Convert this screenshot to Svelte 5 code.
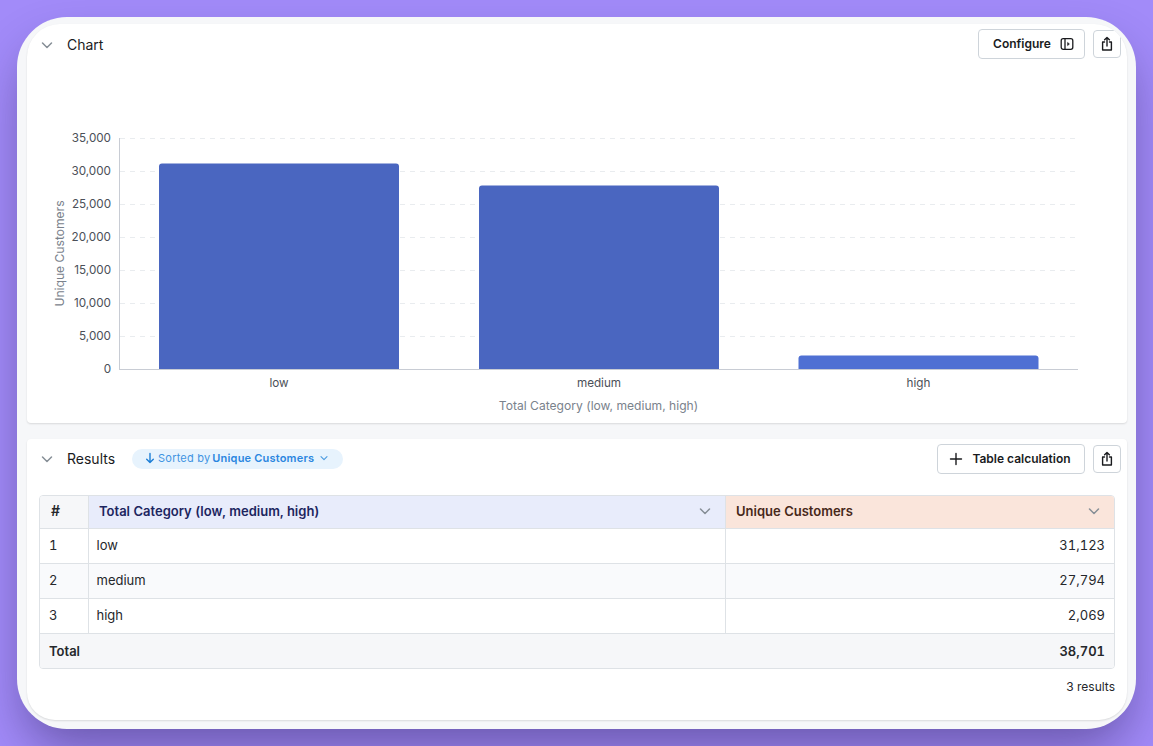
<script>
  const ticks = [
    { label: '35,000', y: 138.5 },
    { label: '30,000', y: 171.5 },
    { label: '25,000', y: 204.5 },
    { label: '20,000', y: 237.5 },
    { label: '15,000', y: 270.5 },
    { label: '10,000', y: 303.5 },
    { label: '5,000', y: 336.5 },
    { label: '0', y: 369.5 }
  ];

  const bars = [
    { label: 'low', x: 159, top: 163.5, fill: '#4a66c0' },
    { label: 'medium', x: 479, top: 185.5, fill: '#4a66c0' },
    { label: 'high', x: 798.5, top: 355.5, fill: '#4f70d3' }
  ];

  const rows = [
    { n: 1, cat: 'low', val: '31,123' },
    { n: 2, cat: 'medium', val: '27,794' },
    { n: 3, cat: 'high', val: '2,069' }
  ];

  // card-local coords: the svg starts at the card's top-left (27, 24)
  const barPath = (b) => {
    const l = b.x - 27;
    const t = b.top - 24;
    const r = l + 240;
    const base = 345;
    return `M${l} ${base}V${t + 3}Q${l} ${t} ${l + 3} ${t}H${r - 3}Q${r} ${t} ${r} ${t + 3}V${base}Z`;
  };
</script>

{#snippet chevron()}
  <svg class="chev" width="16" height="16" viewBox="0 0 16 16" fill="none">
    <path d="M3.5 6 8 10.5 12.5 6" stroke="#868e96" stroke-width="1.5" stroke-linecap="round" stroke-linejoin="round" />
  </svg>
{/snippet}

{#snippet share()}
  <button class="btn square">
    <svg width="14" height="16" viewBox="0 0 14 16" fill="none" stroke="#1a1b1e" stroke-width="1.4" stroke-linecap="round" stroke-linejoin="round">
      <path d="M4.5 6H2.6v8h8.8V6H9.5" />
      <path d="M7 10V1.5M4.6 3.7 7 1.4l2.4 2.3" />
    </svg>
  </button>
{/snippet}

<div class="window">
  <section class="card chart-card">
    <header class="bar">
      <div class="title">
        {@render chevron()}
        <span>Chart</span>
      </div>
      <div class="actions">
        <button class="btn configure">
          <span class="lbl">Configure</span>
          <svg width="14" height="14" viewBox="0 0 14 14" fill="none" stroke="#1a1b1e" stroke-width="1.3">
            <rect x="1.2" y="1.7" width="11.6" height="10.6" rx="2" />
            <path d="M5 1.7v10.6" />
            <path d="M7.6 5.4 9.4 7 7.6 8.6Z" fill="#1a1b1e" stroke-width="0.6" />
          </svg>
        </button>
        {@render share()}
      </div>
    </header>

    <svg class="plot" width="1100" height="399" viewBox="0 0 1100 399">
      {#each ticks as t, i}
        {#if i < ticks.length - 1}
          <line x1="93" x2="1051" y1={t.y - 24} y2={t.y - 24} class="grid" />
        {/if}
        <text x="84" y={t.y - 24 + 3.5} text-anchor="end" class="tick">{t.label}</text>
      {/each}
      {#each bars as b}
        <path d={barPath(b)} fill={b.fill} />
        <text x={b.x - 27 + 120} y="363" text-anchor="middle" class="cat">{b.label}</text>
      {/each}
      <line x1="92.5" x2="92.5" y1="114" y2="345.5" class="axis" />
      <line x1="92" x2="1051" y1="345.5" y2="345.5" class="axis" />
      <text x="571.5" y="386" text-anchor="middle" class="axis-label">Total Category (low, medium, high)</text>
      <text transform="translate(36.5 229.5) rotate(-90)" text-anchor="middle" class="axis-label">Unique Customers</text>
    </svg>
  </section>

  <section class="card results-card">
    <header class="bar">
      <div class="title">
        {@render chevron()}
        <span>Results</span>
        <span class="pill">
          <svg width="10" height="12" viewBox="0 0 10 12" fill="none" stroke="#1c7ed6" stroke-width="1.4" stroke-linecap="round" stroke-linejoin="round">
            <path d="M5 1.5v9M1.7 7.2 5 10.5l3.3-3.3" />
          </svg>
          <span class="sorted">Sorted by</span>
          <b>Unique Customers</b>
          <svg class="pill-chev" width="10" height="10" viewBox="0 0 10 10" fill="none">
            <path d="M2 3.7 5 6.7l3-3" stroke="#4a9be0" stroke-width="1.1" stroke-linecap="round" stroke-linejoin="round" />
          </svg>
        </span>
      </div>
      <div class="actions">
        <button class="btn calc">
          <svg width="14" height="14" viewBox="0 0 14 14" fill="none" stroke="#1a1b1e" stroke-width="1.4" stroke-linecap="round">
            <path d="M7 1.5v11M1.5 7h11" />
          </svg>
          <span class="lbl">Table calculation</span>
        </button>
        {@render share()}
      </div>
    </header>

    <div class="table-wrap">
      <table>
        <thead>
          <tr>
            <th class="idx">#</th>
            <th class="dim">
              <div class="th-in">Total Category (low, medium, high) {@render chevron()}</div>
            </th>
            <th class="metric">
              <div class="th-in">Unique Customers {@render chevron()}</div>
            </th>
          </tr>
        </thead>
        <tbody>
          {#each rows as r, i}
            <tr class:odd={i % 2 === 1}>
              <td class="idx-cell">{r.n}</td>
              <td>{r.cat}</td>
              <td class="num">{r.val}</td>
            </tr>
          {/each}
        </tbody>
        <tfoot>
          <tr>
            <td colspan="2">Total</td>
            <td class="num">38,701</td>
          </tr>
        </tfoot>
      </table>
    </div>
    <div class="count">3 results</div>
  </section>
</div>

<style>
  :global(body) {
    margin: 0;
    height: 746px;
    overflow: hidden;
    background: #a28bf9;
    font-family: Inter, "Liberation Sans", sans-serif;
  }

  .window {
    box-sizing: border-box;
    width: 1119px;
    height: 712px;
    margin: 17px 0 0 17px;
    padding: 7px 9px 9px 10px;
    display: flex;
    flex-direction: column;
    gap: 16px;
    background: #f6f7f9;
    border-radius: 50px;
    box-shadow: 0 25px 50px -8px rgba(30, 20, 70, 0.45);
  }

  .card {
    background: #fff;
    border-radius: 4px;
    box-shadow: 0 1px 2px rgba(0, 0, 0, 0.12);
    position: relative;
    overflow: hidden;
  }

  .chart-card {
    height: 399px;
    border-radius: 33px 33px 4px 4px;
  }

  .results-card {
    height: 281px;
    border-radius: 4px 4px 28px 28px;
  }

  .bar {
    display: flex;
    justify-content: space-between;
    align-items: center;
    padding: 5px 6px 0 12px;
  }

  .title {
    display: flex;
    align-items: center;
    gap: 12px;
    font-size: 14px;
    color: #1a1b1e;
  }

  .chart-card .title {
    margin-top: 1px;
  }

  .results-card .title > span:nth-child(2) {
    position: relative;
    top: -1px;
  }

  .actions {
    display: flex;
    align-items: center;
    gap: 8px;
  }

  .btn {
    display: flex;
    align-items: center;
    justify-content: center;
    box-sizing: border-box;
    background: #fff;
    border: 1px solid #ced4da;
    border-radius: 4px;
    font-family: inherit;
    font-size: 12px;
    font-weight: 600;
    color: #1a1b1e;
    padding: 0;
  }

  .lbl {
    position: relative;
    top: -1px;
  }

  .configure {
    width: 107px;
    height: 30px;
    gap: 9px;
    padding-left: 4px;
  }

  .calc {
    width: 148px;
    height: 30px;
    gap: 9px;
    padding-right: 2px;
  }

  .square {
    width: 28px;
    height: 28px;
  }

  .plot {
    position: absolute;
    top: 0;
    left: 0;
  }

  .grid {
    stroke: #e9ecef;
    stroke-dasharray: 5 5;
  }

  .axis {
    stroke: #c8ccd4;
  }

  .tick,
  .cat {
    font-size: 11.7px;
    fill: #4b5058;
  }

  .axis-label {
    font-size: 12.1px;
    fill: #7a828c;
  }

  .pill {
    box-sizing: border-box;
    display: flex;
    align-items: center;
    margin: -1px 0 0 5px;
    height: 20px;
    padding: 0 14px 1px 13px;
    border-radius: 10px;
    background: #e7f3fd;
    font-size: 11px;
    letter-spacing: 0.2px;
    color: #3f94e2;
    white-space: nowrap;
  }

  .sorted {
    margin: 0 2px 0 3px;
  }

  .pill b {
    font-weight: 600;
    color: #2a86e0;
  }

  .pill-chev {
    margin-left: 5px;
  }

  .table-wrap {
    margin: 21px 12px 0;
    border: 1px solid #dee2e6;
    border-radius: 4px;
    overflow: hidden;
  }

  table {
    width: 100%;
    border-collapse: collapse;
    table-layout: fixed;
    font-size: 13px;
    color: #25272b;
    font-variant-numeric: tabular-nums;
  }

  th {
    box-sizing: border-box;
    height: 32px;
    padding: 0 0 2px;
    text-align: left;
    font-weight: 600;
    font-size: 13px;
    border-bottom: 1px solid #dee2e6;
    border-left: 1px solid #dee2e6;
  }

  th:first-child {
    border-left: none;
  }

  .idx {
    width: 48px;
    background: #f6f7f9;
    padding-left: 11px;
    font-size: 14px;
  }

  .dim {
    width: 637px;
    background: #e8ecfb;
    color: #1c2560;
  }

  .metric {
    background: #fae5db;
    color: #47281a;
  }

  .th-in {
    display: flex;
    justify-content: space-between;
    align-items: center;
    padding: 0 12px 0 10.5px;
  }

  td {
    box-sizing: border-box;
    height: 35px;
    padding: 0 9px 2px 8px;
    border-bottom: 1px solid #dee2e6;
    border-left: 1px solid #dee2e6;
  }

  td:first-child {
    border-left: none;
  }

  .idx-cell {
    padding-left: 9px;
  }

  .odd td {
    background: #f9fafc;
  }

  .num {
    text-align: right;
  }

  tfoot td {
    height: 35px;
    padding: 0 9px;
    font-weight: 600;
    background: #f6f7f9;
    border-left: none;
    border-bottom: none;
  }

  .count {
    margin: 10px 12px 0 0;
    text-align: right;
    font-size: 12px;
    color: #25272b;
  }
</style>
